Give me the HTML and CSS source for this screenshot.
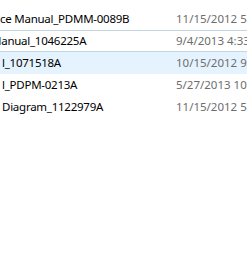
FILE: index.html
```html
<!DOCTYPE html>
<html lang="en">
<head>
  <meta charset="UTF-8" />
  <title>Manuals</title>
  <link rel="stylesheet" href="styles.css">
</head>
<body>
  <div class="file-list">
    <div class="file-row">
      <div class="name"><span class="clip">ce Manual_PDMM-0089B</span></div>
      <div class="date">11/15/2012 5:43 PM</div>
    </div>
    <div class="file-row focused">
      <div class="name"><span class="clip cut-m">Manual_1046225A</span></div>
      <div class="date">9/4/2013 4:33 PM</div>
    </div>
    <div class="file-row hovered">
      <div class="name"><span class="clip inset">l_1071518A</span></div>
      <div class="date">10/15/2012 9:12 AM</div>
    </div>
    <div class="file-row">
      <div class="name"><span class="clip inset">l_PDPM-0213A</span></div>
      <div class="date">5/27/2013 10:05 AM</div>
    </div>
    <div class="file-row">
      <div class="name"><span class="clip inset">Diagram_1122979A</span></div>
      <div class="date">11/15/2012 5:43 PM</div>
    </div>
  </div>
</body>
</html>
```

FILE: styles.css
```css
body {
  margin: 0;
  background: #fff;
  font-family: 'Noto Sans', sans-serif;
  font-size: 11.5px;
  color: #000;
  overflow: hidden;
}

.file-list {
  padding-top: 8px;
}

.file-row {
  display: flex;
  height: 22px;
  line-height: 21px;
  white-space: nowrap;
  overflow: hidden;
}

.file-row.focused {
  border-top: 1px solid #c5d6e3;
  border-bottom: 1px solid #c5d6e3;
  height: 20px;
  line-height: 19px;
}

.file-row.hovered {
  background: #e5f3ff;
}

.name {
  width: 176px;
  flex-shrink: 0;
  overflow: hidden;
  letter-spacing: -0.25px;
}

.clip {
  display: inline-block;
}

.cut-m {
  margin-left: -9px;
}

.inset {
  padding-left: 2px;
}

.date {
  color: #6d6d6d;
}
```
